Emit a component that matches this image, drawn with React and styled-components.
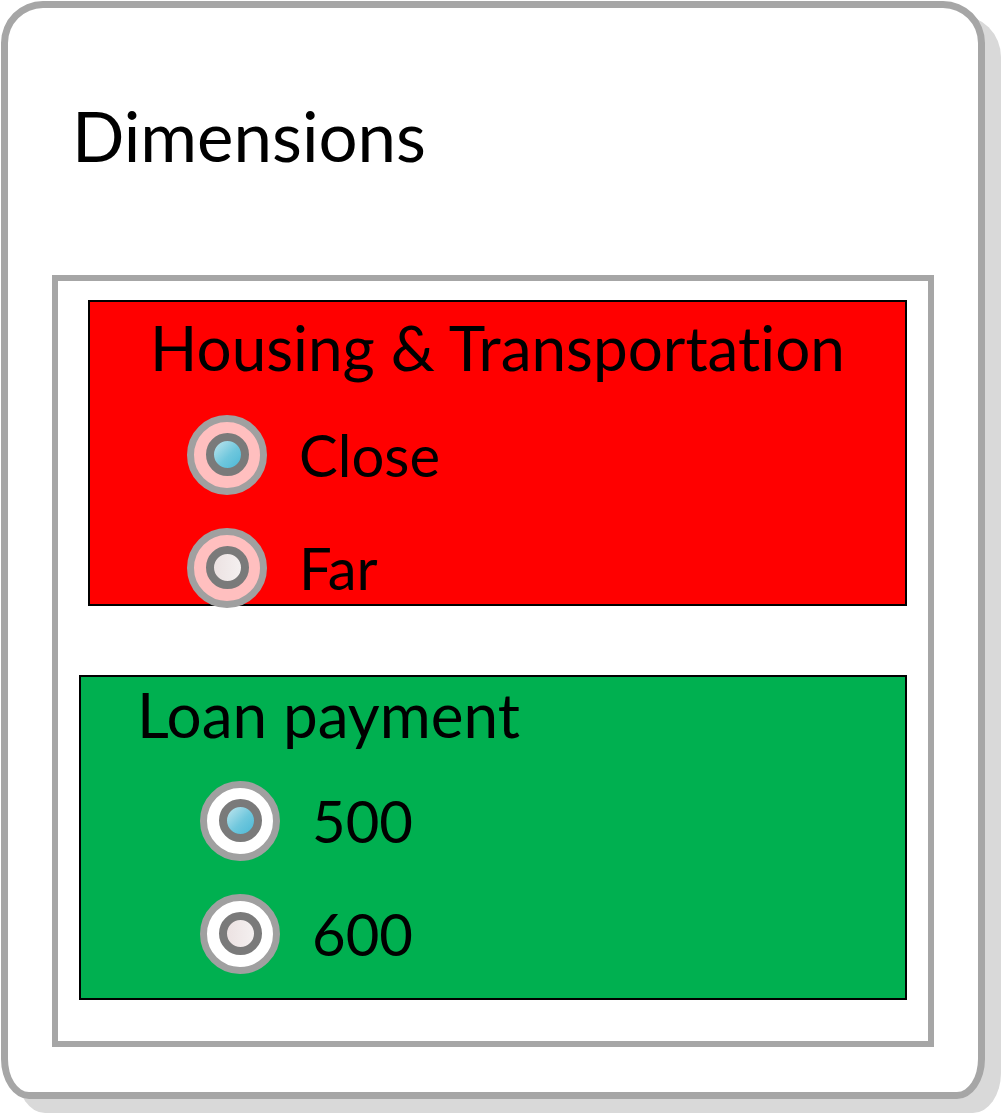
import React from 'react';
import styled, { createGlobalStyle } from 'styled-components';

const Global = createGlobalStyle`
  html, body {
    margin: 0;
    padding: 0;
    background: #ffffff;
  }
  body {
    font-family: Lato, "Open Sans", sans-serif;
    font-variant-ligatures: none;
    color: #000000;
  }
`;

const Page = styled.div`
  width: 1001px;
  height: 1114px;
  padding: 1px 0 0 1px;
  box-sizing: border-box;
`;

const Card = styled.div`
  width: 984px;
  height: 1098px;
  box-sizing: border-box;
  border: 7px solid #a6a6a6;
  border-radius: 42px 42px 28px 28px / 42px 42px 40px 40px;
  background: #ffffff;
  box-shadow: 16px 14px 0 #d9d9d9;
  padding: 0 44px 45px 44px;
  display: flex;
  flex-direction: column;
`;

const Title = styled.h1`
  margin: 0;
  height: 267px;
  box-sizing: border-box;
  padding: 88px 0 0 20px;
  font-size: 69px;
  font-weight: 400;
  line-height: 80px;
`;

const Panel = styled.div`
  flex: 1;
  border: 6px solid #a6a6a6;
  padding: 19px 21px 41px 21px;
  display: flex;
  flex-direction: column;
  gap: 69px;
`;

const Group = styled.div`
  background: ${p => p.$bg};
  border: 2px solid #000000;
  box-sizing: border-box;
  height: ${p => p.$height}px;
  margin-left: ${p => p.$indent}px;
  display: flex;
  flex-direction: column;
`;

const GroupTitle = styled.div`
  font-size: 62px;
  line-height: 70px;
  margin-top: ${p => p.$top}px;
  text-align: ${p => p.$align};
  padding-left: ${p => p.$pad}px;
`;

const Options = styled.div`
  display: flex;
  flex-direction: column;
  padding-left: ${p => p.$pad}px;
  margin-top: ${p => p.$top}px;
`;

const Option = styled.label`
  display: flex;
  align-items: center;
  gap: 32px;
  height: 113px;
  font-size: 58px;
`;

const RadioOuter = styled.span`
  width: 80px;
  height: 80px;
  box-sizing: border-box;
  border-radius: 50%;
  border: 7px solid #a0a0a0;
  background: ${p => p.$fill};
  display: flex;
  align-items: center;
  justify-content: center;
  flex-shrink: 0;
`;

const RadioInner = styled.span`
  width: 43px;
  height: 43px;
  box-sizing: border-box;
  border-radius: 50%;
  border: 8px solid #7a7a7a;
  background: ${p => p.$on
    ? 'linear-gradient(135deg, #c0e6ee 0%, #6fc7dd 55%, #4cb8d6 100%)'
    : 'linear-gradient(90deg, #ece2e2 0%, #f4f0f0 100%)'};
`;

const Radio = ({ on, fill }) => (
  <RadioOuter $fill={fill}>
    <RadioInner $on={on} />
  </RadioOuter>
);

const groups = [
  {
    title: 'Housing & Transportation',
    bg: '#ff0000',
    fill: '#ffbfbf',
    height: 306,
    indent: 9,
    align: 'center',
    titlePad: 0,
    titleTop: 10,
    optPad: 97,
    optTop: 16,
    options: [{ label: 'Close', on: true }, { label: 'Far', on: false }],
  },
  {
    title: 'Loan payment',
    bg: '#00b050',
    fill: '#ffffff',
    height: 325,
    indent: 0,
    align: 'left',
    titlePad: 56,
    titleTop: 2,
    optPad: 119,
    optTop: 15,
    options: [{ label: '500', on: true }, { label: '600', on: false }],
  },
];

export default function App() {
  return (
    <Page>
      <Global />
      <Card>
        <Title>Dimensions</Title>
        <Panel>
          {groups.map(g => (
            <Group key={g.title} $bg={g.bg} $height={g.height} $indent={g.indent}>
              <GroupTitle $align={g.align} $pad={g.titlePad} $top={g.titleTop}>
                {g.title}
              </GroupTitle>
              <Options $pad={g.optPad} $top={g.optTop}>
                {g.options.map(o => (
                  <Option key={o.label}>
                    <Radio on={o.on} fill={g.fill} />
                    {o.label}
                  </Option>
                ))}
              </Options>
            </Group>
          ))}
        </Panel>
      </Card>
    </Page>
  );
}
